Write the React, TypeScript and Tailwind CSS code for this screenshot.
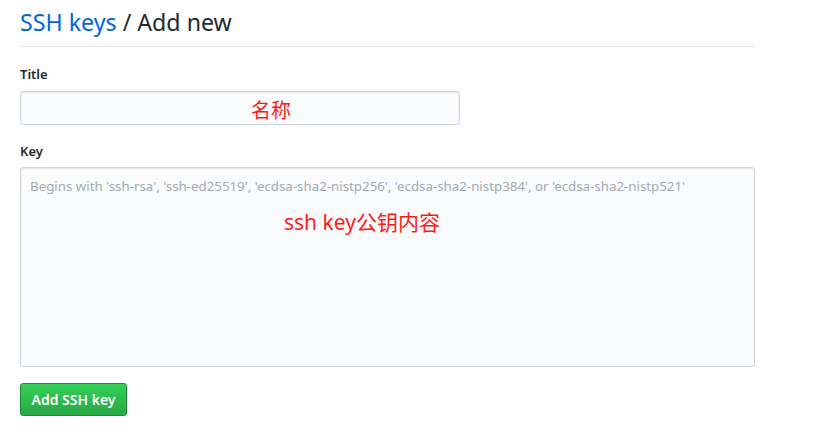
export default function App() {
  const font = { fontFamily: '"Noto Sans", "Noto Sans CJK SC", sans-serif' };
  return (
    <div className="min-h-[433px] bg-white text-[#24292e]" style={font}>
      <div className="ml-[20px] w-[735px]">
        <div className="border-b border-[#e1e4e8] pt-[7px] pb-[9px]">
          <h1 className="text-[23.2px] leading-[30px] font-normal">
            <a className="text-[#0366d6]">SSH keys</a> / Add new
          </h1>
        </div>

        <form className="pt-[17px]">
          <label className="block text-[13px] leading-[21px] font-semibold">Title</label>
          <div className="relative mt-[6px] h-[34px] w-[440px] rounded-[3px] border border-[#d1d5da] bg-[#fafbfc] shadow-[inset_0_1px_2px_rgba(27,31,35,0.075)]">
            <span
              className="absolute left-[230px] top-[6px] text-[20px] leading-[24px] text-[#ff1a1a]"
              style={{ fontFamily: '"Noto Sans CJK SC", sans-serif' }}
            >
              名称
            </span>
          </div>

          <label className="mt-[16px] block text-[13px] leading-[21px] font-semibold">Key</label>
          <div className="relative mt-[5px] h-[200px] w-[735px] rounded-[3px] border border-[#d1d5da] bg-[#fafbfc] shadow-[inset_0_1px_2px_rgba(27,31,35,0.075)]">
            <div className="px-[9px] pt-[8px] text-[13.3px] leading-[20px] text-[#a3aab1]">
              Begins with 'ssh-rsa', 'ssh-ed25519', 'ecdsa-sha2-nistp256', 'ecdsa-sha2-nistp384', or 'ecdsa-sha2-nistp521'
            </div>
            <span
              className="absolute left-[263px] top-[41px] text-[21px] leading-[26px] text-[#ff1a1a]"
              style={{ fontFamily: '"Noto Sans", "Noto Sans CJK SC", sans-serif' }}
            >
              ssh key公钥内容
            </span>
          </div>

          <button
            type="button"
            className="mt-[16px] h-[33px] w-[107px] rounded-[3px] border border-[#1e8a3a] bg-gradient-to-b from-[#34d058] to-[#28a745] text-[14px] font-semibold text-white"
          >
            Add SSH key
          </button>
        </form>
      </div>
    </div>
  );
}
